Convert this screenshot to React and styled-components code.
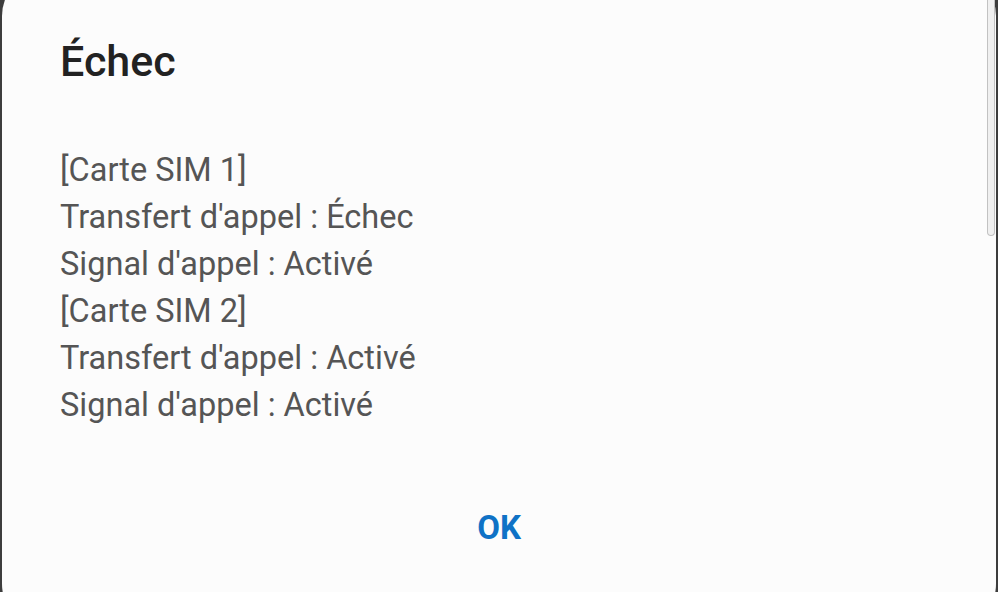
import React from 'react';
import styled, { createGlobalStyle } from 'styled-components';

const GlobalStyle = createGlobalStyle`
  html, body {
    margin: 0;
    padding: 0;
    width: 998px;
    height: 592px;
    overflow: hidden;
    background: #3d3d3d;
  }
`;

const Dialog = styled.div`
  position: relative;
  box-sizing: border-box;
  height: 660px;
  margin: -30px 2px 0 2px;
  padding: 66px 58px 0 58px;
  background: #fcfcfc;
  border-radius: 46px;
  font-family: Roboto, "Noto Sans", sans-serif;
  display: flex;
  flex-direction: column;
`;

const Title = styled.h1`
  margin: 0;
  font-size: 43px;
  line-height: 50px;
  font-weight: 500;
  color: #222222;
`;

const Message = styled.div`
  margin-top: 61px;
  display: flex;
  flex-direction: column;
`;

const Line = styled.div`
  font-size: 32.5px;
  line-height: 47px;
  color: #555555;
`;

const Actions = styled.div`
  margin-top: 75px;
  display: flex;
  justify-content: center;
`;

const Button = styled.button`
  border: none;
  background: none;
  padding: 0 12px;
  font-family: Roboto, "Noto Sans", sans-serif;
  font-size: 33px;
  line-height: 48px;
  font-weight: 700;
  color: #0f72c6;
`;

const Scrollbar = styled.div`
  position: absolute;
  top: 0;
  right: 1px;
  width: 8px;
  height: 266px;
  box-sizing: border-box;
  border: 1px solid #c2c2c2;
  border-top: none;
  border-radius: 0 0 6px 6px;
  background: #f0f0f0;
`;

const lines = [
  '[Carte SIM 1]',
  "Transfert d'appel : Échec",
  "Signal d'appel : Activé",
  '[Carte SIM 2]',
  "Transfert d'appel : Activé",
  "Signal d'appel : Activé",
];

const App = () => {
  return (
    <>
      <GlobalStyle />
      <Dialog>
        <Scrollbar />
        <Title>Échec</Title>
        <Message>
          {lines.map((l, i) => (
            <Line key={i}>{l}</Line>
          ))}
        </Message>
        <Actions>
          <Button>OK</Button>
        </Actions>
      </Dialog>
    </>
  );
};

export default App;
